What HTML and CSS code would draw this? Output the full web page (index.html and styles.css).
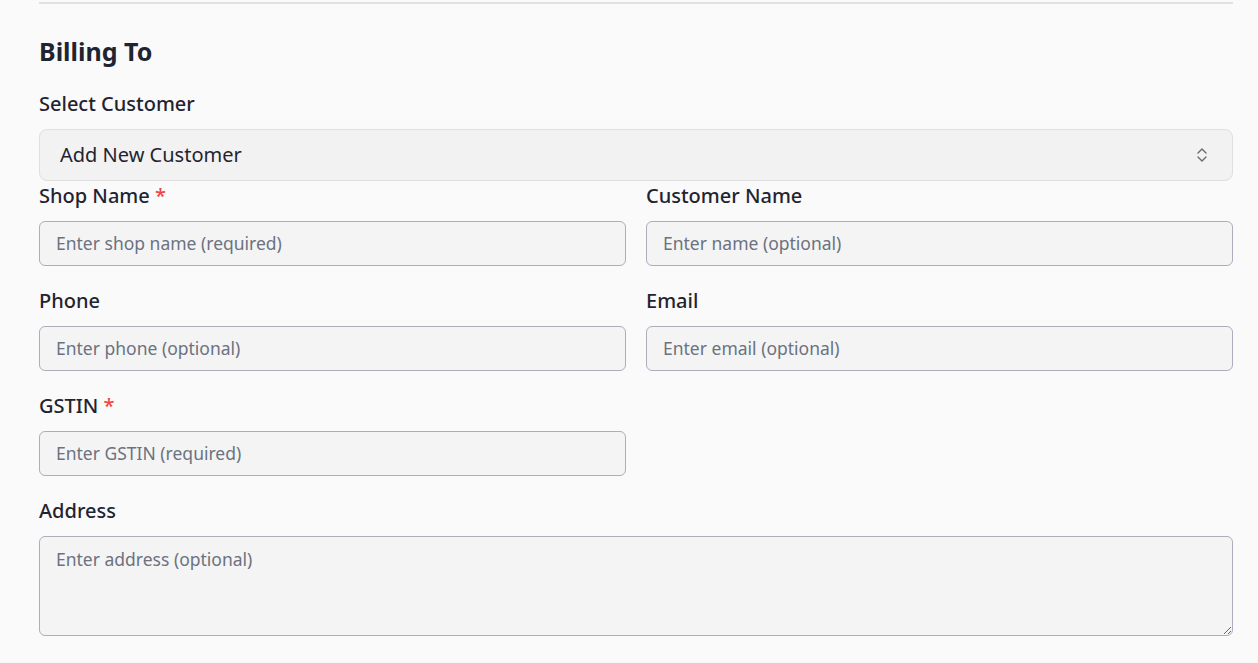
FILE: index.html
```html
<!DOCTYPE html>
<html lang="en">
<head>
<meta charset="utf-8">
<title>Billing To</title>
<link rel="stylesheet" href="styles.css">
</head>
<body>
<section class="billing">
  <h2 class="title">Billing To</h2>
  <div class="select-group">
    <label class="label" for="customer">Select Customer</label>
    <div class="select-wrap">
      <select id="customer" class="select">
        <option>Add New Customer</option>
      </select>
      <svg class="chevron" width="14" height="18" viewBox="0 0 14 18" fill="none" stroke="#6b6b6b" stroke-width="1.4" stroke-linecap="round" stroke-linejoin="round"><path d="M3 7 L7 3 L11 7"/><path d="M3 11 L7 15 L11 11"/></svg>
    </div>
  </div>
  <div class="grid">
    <div class="field">
      <label class="label">Shop Name <span class="req">*</span></label>
      <input class="input" type="text" placeholder="Enter shop name (required)">
    </div>
    <div class="field">
      <label class="label">Customer Name</label>
      <input class="input" type="text" placeholder="Enter name (optional)">
    </div>
    <div class="field">
      <label class="label">Phone</label>
      <input class="input" type="text" placeholder="Enter phone (optional)">
    </div>
    <div class="field">
      <label class="label">Email</label>
      <input class="input" type="text" placeholder="Enter email (optional)">
    </div>
    <div class="field">
      <label class="label">GSTIN <span class="req">*</span></label>
      <input class="input" type="text" placeholder="Enter GSTIN (required)">
    </div>
    <div class="field"></div>
    <div class="field wide">
      <label class="label">Address</label>
      <textarea class="input textarea" placeholder="Enter address (optional)"></textarea>
    </div>
  </div>
</section>
</body>
</html>
```
FILE: styles.css
```css
html, body {
  margin: 0;
  padding: 0;
  background: #fafafa;
}
body {
  font-family: "Noto Sans", "Open Sans", sans-serif;
  color: #1f2430;
}
.billing {
  margin: 2px 25px 0 39px;
  border-top: 2px solid #e1e1e1;
}
.title {
  margin: 31px 0 0;
  font-size: 25px;
  line-height: 32px;
  font-weight: 700;
  color: #1f2430;
}
.select-group {
  margin-top: 22px;
}
.label {
  display: block;
  font-size: 20px;
  line-height: 30px;
  font-weight: 500;
  color: #1f2430;
}
.select-group .label {
  margin-bottom: 10px;
}
.select-wrap {
  position: relative;
}
.select {
  display: block;
  width: 100%;
  height: 52px;
  box-sizing: border-box;
  appearance: none;
  -webkit-appearance: none;
  background: #f2f2f2;
  border: 1px solid #e0e0e0;
  border-radius: 8px;
  padding: 0 20px 2px;
  font-family: inherit;
  font-size: 20px;
  color: #1f2430;
  outline: none;
}
.chevron {
  position: absolute;
  right: 24px;
  top: 17px;
}
.grid {
  display: grid;
  grid-template-columns: 1fr 1fr;
  column-gap: 20px;
}
.field {
  display: flex;
  flex-direction: column;
  gap: 10px;
  padding-bottom: 20px;
}
.wide {
  grid-column: 1 / -1;
}
.input {
  box-sizing: border-box;
  width: 100%;
  height: 45px;
  background: #f4f4f4;
  border: 1px solid #aeadbd;
  border-radius: 6px;
  padding: 0 16px 2px;
  font-family: inherit;
  font-size: 17.5px;
  color: #1f2430;
  outline: none;
}
.input::placeholder {
  color: #6b7280;
}
.textarea {
  height: 100px;
  padding: 10px 16px;
  resize: vertical;
  display: block;
}
.req {
  color: #ef4444;
}
```
